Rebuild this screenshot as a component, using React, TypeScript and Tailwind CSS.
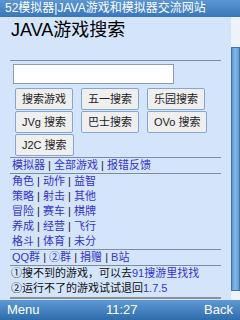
import React from "react";

const font = {
  fontFamily: '"Liberation Sans", "Noto Sans CJK SC", sans-serif',
};

function Sep() {
  return <span className="text-[#222]"> | </span>;
}

function LinkRow({ items }: { items: string[] }) {
  return (
    <div className="h-[15px] pl-[2px] text-[11px] leading-[15px] text-[#3434c8]">
      {items.map((item, i) => (
        <React.Fragment key={item}>
          {i > 0 ? <Sep /> : null}
          <span>{item}</span>
        </React.Fragment>
      ))}
    </div>
  );
}

function Rule() {
  return <div className="h-px bg-[#7f8c99]" />;
}

function Btn({ label }: { label: string }) {
  return (
    <button className="h-[22px] rounded-[2px] border border-[#86a6cc] bg-[#efefef] px-[6px] text-[11px] leading-[20px] text-[#222]">
      {label}
    </button>
  );
}

export default function App() {
  return (
    <div
      className="flex h-[320px] w-[240px] flex-col overflow-hidden bg-[#d4e5fb]"
      style={font}
    >
      <div className="h-[17px] bg-gradient-to-b from-[#5b96d2] to-[#3a77b9] pl-[5px] text-[12px] leading-[17px] whitespace-nowrap text-white">
        52模拟器|JAVA游戏和模拟器交流网站
      </div>

      <div className="flex flex-1">
        <div className="flex-1 px-[10px] pt-[2px]">
          <div className="h-[22px] pl-[1px] text-[18px] leading-[22px] text-black">
            JAVA游戏搜索
          </div>
          <div className="mt-[19px]">
            <Rule />
          </div>
          <div className="mt-[3px] ml-[3px] h-[20px] w-[161px] border border-[#8e9bab] bg-white" />
          <div className="mt-[4px] ml-[5px] flex gap-[8px]">
            <Btn label="搜索游戏" />
            <Btn label="五一搜索" />
            <Btn label="乐园搜索" />
          </div>
          <div className="mt-px ml-[5px] flex gap-[8px]">
            <Btn label="JVg 搜索" />
            <Btn label="巴士搜索" />
            <Btn label="OVo 搜索" />
          </div>
          <div className="mt-px ml-[5px] flex gap-[8px]">
            <Btn label="J2C 搜索" />
          </div>
          <div className="mt-px">
            <Rule />
          </div>
          <LinkRow items={["模拟器", "全部游戏", "报错反馈"]} />
          <Rule />
          <LinkRow items={["角色", "动作", "益智"]} />
          <LinkRow items={["策略", "射击", "其他"]} />
          <LinkRow items={["冒险", "赛车", "棋牌"]} />
          <LinkRow items={["养成", "经营", "飞行"]} />
          <LinkRow items={["格斗", "体育", "未分"]} />
          <Rule />
          <LinkRow items={["QQ群", "②群", "捐赠", "B站"]} />
          <Rule />
          <div className="h-[15px] pl-px text-[11px] leading-[15px] whitespace-nowrap text-[#111]">
            ①搜不到的游戏，可以去
            <span className="text-[#3434c8]">91搜游里找找</span>
          </div>
          <div className="h-[15px] pl-px text-[11px] leading-[15px] whitespace-nowrap text-[#111]">
            ②运行不了的游戏试试退回
            <span className="text-[#3434c8]">1.7.5</span>
          </div>
          <div className="mt-px h-[2px] bg-[#8d9096]" />
        </div>

        <div className="flex w-[9px] flex-col bg-[#eef3fa]">
          <div className="mt-[30px] h-[244px] border border-[#3f77b0] bg-gradient-to-r from-[#5f98d0] via-[#86b8e6] to-[#5f98d0]" />
        </div>
      </div>

      <div className="flex h-[20px] items-center justify-between bg-gradient-to-b from-[#5d9ad5] to-[#2f6cab] px-[7px] text-[13px] text-white">
        <span>Menu</span>
        <span>11:27</span>
        <span>Back</span>
      </div>
    </div>
  );
}
